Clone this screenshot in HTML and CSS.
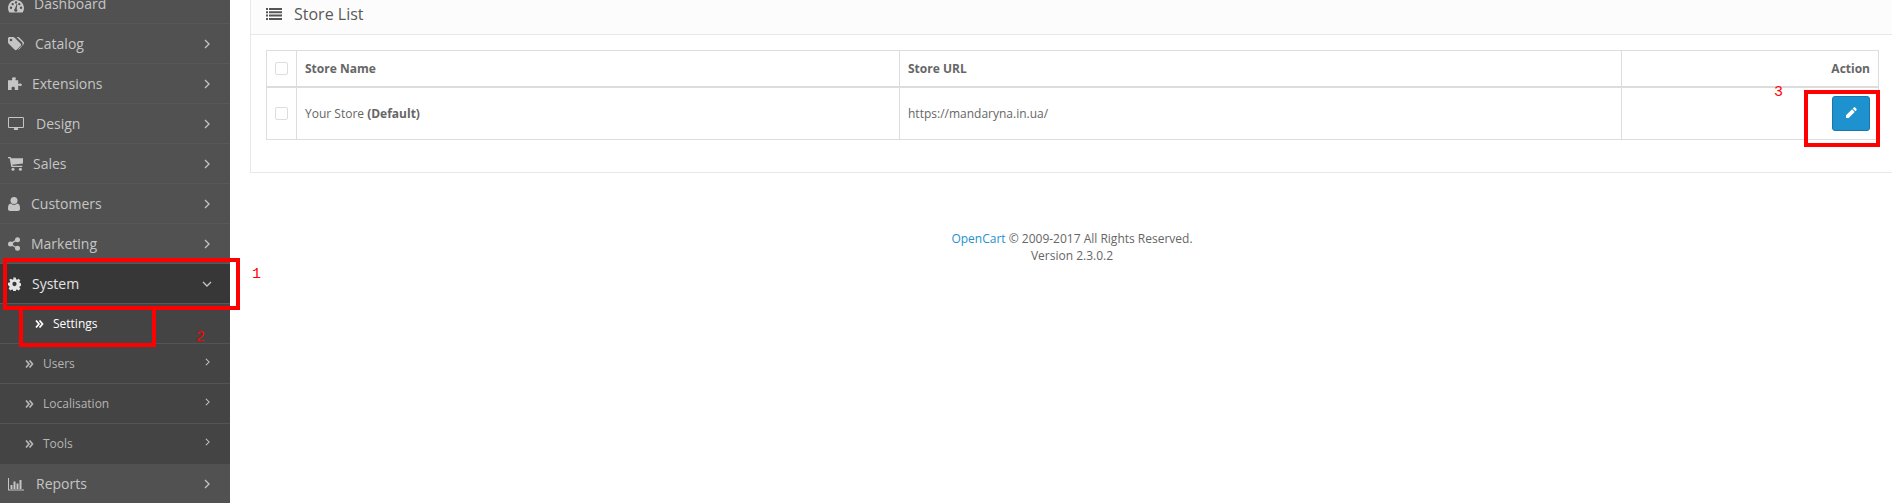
FILE: index.html
```html
<!DOCTYPE html>
<html lang="en">
<head>
  <meta charset="UTF-8" />
  <title>Store List</title>
  <link rel="stylesheet" href="styles.css">
</head>
<body>
  <svg class="defs" width="0" height="0">
    <symbol id="i-gauge" viewBox="0 0 16 14"><path fill-rule="evenodd" d="M8 1C3.600 1 0 4.600 0 9c0 1.600.4 3 1.200 4.200.2.300.4.400.7.400h12.200c.3 0 .5-.1.700-.4C15.600 12 16 10.600 16 9c0-4.400-3.600-8-8-8zM3 10a1.200 1.200 0 1 1 0-2.400A1.200 1.200 0 0 1 3 10zm1.700-3.700a1.200 1.200 0 1 1 0-2.400 1.200 1.200 0 0 1 0 2.400zM8 4.600a1.200 1.200 0 1 1 0-2.400 1.200 1.200 0 0 1 0 2.400zm1.500 6.600a1.700 1.700 0 1 1-2.600-1.500L8.600 5l.7.200-.6 5c.4.200.7.500.8 1zM13 10a1.200 1.200 0 1 1 0-2.400 1.200 1.200 0 0 1 0 2.400zm-1.700-3.700a1.200 1.200 0 1 1 0-2.400 1.200 1.200 0 0 1 0 2.400z"/></symbol>
    <symbol id="i-tags" viewBox="0 0 16 14"><path fill-rule="evenodd" d="M0 1.500C0 .700.700 0 1.500 0H5c.6 0 1.300.3 1.700.7l6 6c.6.600.6 1.500 0 2.100l-3.900 3.900c-.6.600-1.500.6-2.100 0l-6-6C.300 6.300 0 5.600 0 5zM3 4.300a1.300 1.300 0 1 0 0-2.600 1.300 1.300 0 0 0 0 2.600z"/><path d="M8.500 0h1.400c.6 0 1.300.3 1.700.7l4 4.400c.6.600.6 1.500 0 2.100L11.500 12c-.4.400-1 .6-1.500.5l4-4c.9-.9.900-2.300 0-3.200z"/></symbol>
    <symbol id="i-puzzle" viewBox="0 0 14 14"><path d="M5.700.300c1.300-.5 2.500.3 2.100 1.400-.2.500-.4.800-.3 1.200.1.300.4.400 1 .4h1.700v3c0 .5.200.8.500.8.400 0 .6-.5 1.200-.6 1-.2 1.900.4 1.900 1.300s-.9 1.500-1.900 1.300c-.6-.1-.8-.6-1.200-.6-.3 0-.5.300-.5.800V13H7.300c-.5 0-.8-.2-.8-.5 0-.4.500-.7.500-1.300 0-.9-.8-1.500-1.800-1.500s-1.800.6-1.800 1.500c0 .6.500.9.500 1.300 0 .3-.3.500-.8.500H0V3.300h3.200c.6 0 .9-.1 1-.4.100-.4-.1-.7-.3-1.200C3.700 1.100 4.700.600 5.700.300z"/></symbol>
    <symbol id="i-desktop" viewBox="0 0 16 14"><path fill-rule="evenodd" d="M1.300 0h13.400C15.400 0 16 .6 16 1.300v8.400c0 .7-.6 1.300-1.300 1.300H9.800c0 .9.400 1.400.4 1.700 0 .2-.1.300-.3.300H6.100c-.2 0-.3-.1-.3-.3 0-.3.400-.8.400-1.700H1.300C.6 11 0 10.400 0 9.700V1.300C0 .6.600 0 1.300 0zM1 1v9h14V1z"/></symbol>
    <symbol id="i-cart" viewBox="0 0 15 14"><path fill-rule="evenodd" d="M0 0h2.700l.4 1.300H15v5.200l-10.700 1.300.2.900h9.800v1.300H3.300L1.700 1.300H0z"/><circle cx="5" cy="12.300" r="1.500"/><circle cx="12.400" cy="12.300" r="1.500"/></symbol>
    <symbol id="i-user" viewBox="0 0 12 14"><circle cx="6" cy="3.600" r="3.500"/><path d="M2.700 6.500C3.600 7.300 4.700 7.800 6 7.800s2.400-.5 3.300-1.300C11 6.800 12 8.300 12 11v1c0 1.100-.9 2-2 2H2c-1.100 0-2-.9-2-2v-1c0-2.700 1-4.200 2.700-4.500z"/></symbol>
    <symbol id="i-share" viewBox="0 0 12 14"><circle cx="2.500" cy="7" r="2.500"/><circle cx="9.500" cy="2.700" r="2.500"/><circle cx="9.500" cy="11.300" r="2.500"/><path d="M2 6.300l7-4.200.6 1.100-7 4.200zM2.600 6.500l7 4.200-.6 1.100-7-4.200z"/></symbol>
    <symbol id="i-cog" viewBox="0 0 14 14"><path fill-rule="evenodd" d="M5.700 0h2.600l.4 1.900 1.100.5L11.500 1.300l1.800 1.800-1.100 1.700.5 1.100 1.900.4v2.600l-1.900.4-.5 1.100 1.100 1.700-1.800 1.800-1.700-1.100-1.100.5-.4 1.900H5.700l-.4-1.900-1.100-.5-1.700 1.100L.7 11.900l1.100-1.700-.5-1.100L0 8.300V5.700l1.900-.4.500-1.100-1.100-1.700L3.100 1.300l1.700 1.100 1.100-.5zM7 9.300a2.300 2.300 0 1 0 0-4.600 2.300 2.300 0 0 0 0 4.600z"/></symbol>
    <symbol id="i-chart" viewBox="0 0 16 14"><path d="M0 1h1v11.500h15v1H0z"/><path d="M2.500 8h2v4h-2zM5.500 4.500h2V12h-2zM8.500 6.500h2V12h-2zM11.500 3h2v9h-2z"/></symbol>
    <symbol id="i-list" viewBox="0 0 16 14"><path d="M0 1h2v2H0zM3 1h13v2H3zM0 4.300h2v2H0zM3 4.300h13v2H3zM0 7.600h2v2H0zM3 7.600h13v2H3zM0 10.900h2v2H0zM3 10.900h13v2H3z"/></symbol>
    <symbol id="i-pencil" viewBox="0 0 12 12"><path d="M8.800.6c.4-.4 1-.4 1.400 0l1.200 1.200c.4.400.4 1 0 1.400l-1 1-2.600-2.600zM7.100 2.300l2.600 2.600-6 6H1V8.300z"/></symbol>
    <symbol id="i-right" viewBox="0 0 6 10"><path d="M1 1l4 4-4 4" fill="none" stroke="currentColor" stroke-width="1.300"/></symbol>
    <symbol id="i-down" viewBox="0 0 10 6"><path d="M1 1l4 4 4-4" fill="none" stroke="currentColor" stroke-width="1.300"/></symbol>
    <symbol id="i-double" viewBox="0 0 9 8"><path d="M1 .5L4 4 1 7.500M4.500 .5L7.500 4l-3 3.500" fill="none" stroke="currentColor" stroke-width="1.700"/></symbol>
  </svg>

  <div class="page">
    <nav class="sidebar">
      <ul class="menu">
        <li class="menu-item first"><svg class="ico ico-w"><use href="#i-gauge"/></svg><span class="label gap-34">Dashboard</span></li>
        <li class="menu-item"><svg class="ico ico-w"><use href="#i-tags"/></svg><span class="label gap-35">Catalog</span><svg class="arrow"><use href="#i-right"/></svg></li>
        <li class="menu-item"><svg class="ico ico-p"><use href="#i-puzzle"/></svg><span class="label gap-33">Extensions</span><svg class="arrow"><use href="#i-right"/></svg></li>
        <li class="menu-item"><svg class="ico ico-w"><use href="#i-desktop"/></svg><span class="label gap-36">Design</span><svg class="arrow"><use href="#i-right"/></svg></li>
        <li class="menu-item"><svg class="ico ico-c"><use href="#i-cart"/></svg><span class="label gap-33">Sales</span><svg class="arrow"><use href="#i-right"/></svg></li>
        <li class="menu-item"><svg class="ico ico-u"><use href="#i-user"/></svg><span class="label gap-31">Customers</span><svg class="arrow"><use href="#i-right"/></svg></li>
        <li class="menu-item"><svg class="ico ico-s"><use href="#i-share"/></svg><span class="label gap-32">Marketing</span><svg class="arrow"><use href="#i-right"/></svg></li>
        <li class="menu-item open"><svg class="ico ico-g"><use href="#i-cog"/></svg><span class="label gap-32">System</span><svg class="arrow-down"><use href="#i-down"/></svg></li>
        <li class="sub-item current"><svg class="dbl"><use href="#i-double"/></svg><span>Settings</span></li>
        <li class="sub-item"><svg class="dbl"><use href="#i-double"/></svg><span>Users</span><svg class="arrow small"><use href="#i-right"/></svg></li>
        <li class="sub-item"><svg class="dbl"><use href="#i-double"/></svg><span>Localisation</span><svg class="arrow small"><use href="#i-right"/></svg></li>
        <li class="sub-item"><svg class="dbl"><use href="#i-double"/></svg><span>Tools</span><svg class="arrow small"><use href="#i-right"/></svg></li>
        <li class="menu-item last"><svg class="ico ico-w"><use href="#i-chart"/></svg><span class="label gap-36">Reports</span><svg class="arrow"><use href="#i-right"/></svg></li>
      </ul>
    </nav>

    <main class="content">
      <section class="panel">
        <div class="panel-heading">
          <svg class="list-ico"><use href="#i-list"/></svg>
          <h3>Store List</h3>
        </div>
        <div class="panel-body">
          <table class="stores">
            <thead>
              <tr>
                <th class="col-check"><span class="check"></span></th>
                <th class="col-name">Store Name</th>
                <th class="col-url">Store URL</th>
                <th class="col-action">Action</th>
              </tr>
            </thead>
            <tbody>
              <tr>
                <td class="col-check"><span class="check"></span></td>
                <td>Your Store <b>(Default)</b></td>
                <td>https://mandaryna.in.ua/</td>
                <td class="col-action"><a class="btn-edit"><svg class="pencil"><use href="#i-pencil"/></svg></a></td>
              </tr>
            </tbody>
          </table>
        </div>
      </section>
      <footer class="footer">
        <a class="footer-link">OpenCart</a> © 2009-2017 All Rights Reserved.<br>Version 2.3.0.2
      </footer>
    </main>
  </div>

  <!-- red annotations drawn over the screenshot -->
  <div class="mark mark-1"></div>
  <div class="mark mark-2"></div>
  <div class="mark mark-3"></div>
  <span class="num num-1">1</span>
  <span class="num num-2">2</span>
  <span class="num num-3">3</span>
</body>
</html>
```

FILE: styles.css
```css
* {
  box-sizing: border-box;
}

html, body {
  margin: 0;
  padding: 0;
  height: 503px;
  overflow: hidden;
}

body {
  font-family: 'Open Sans', sans-serif;
  font-size: 12px;
  color: #666;
  background-color: #fff;
  position: relative;
}

.defs {
  position: absolute;
}

.page {
  display: flex;
  height: 503px;
}

/* Sidebar */
.sidebar {
  width: 230px;
  flex: none;
  background-color: #515151;
  overflow: hidden;
}

.menu {
  list-style: none;
  margin: 0;
  padding: 0;
}

.menu-item {
  display: flex;
  align-items: center;
  height: 40px;
  padding-left: 8px;
  font-size: 14px;
  color: #c5c5c5;
  border-bottom: 1px solid #585858;
}

.menu-item.first {
  height: 24px;
  align-items: flex-end;
  padding-bottom: 10px;
}

.menu-item.open {
  background-color: #373737;
  color: #e4e4e4;
  border-top: 1px solid #585858;
  border-bottom-color: #585858;
  height: 41px;
  margin-top: -1px;
}

.menu-item.last {
  border-bottom: 0;
  padding-bottom: 1px;
}

.ico {
  flex: none;
  height: 14px;
  fill: currentColor;
}

.ico-w { width: 16px; }
.ico-p { width: 14px; }
.ico-c { width: 15px; }
.ico-u { width: 12px; }
.ico-s { width: 12px; }
.ico-g { width: 13px; }

.label { flex: none; }

.gap-31 { margin-left: 11px; }
.gap-32 { margin-left: 11px; }
.gap-33 { margin-left: 10px; }
.gap-34 { margin-left: 10px; }
.gap-35 { margin-left: 11px; }
.gap-36 { margin-left: 12px; }

.arrow {
  width: 6px;
  height: 10px;
  margin-left: auto;
  margin-right: 20px;
  color: #c5c5c5;
}

.arrow.small {
  width: 5px;
  height: 8px;
  margin-top: -3px;
}

.arrow-down {
  width: 10px;
  height: 6px;
  margin-left: auto;
  margin-right: 18px;
  color: #c5c5c5;
}

.sub-item {
  display: flex;
  align-items: center;
  height: 40px;
  padding-left: 25px;
  font-size: 12px;
  color: #b5b5b5;
  background-color: #444;
  border-bottom: 1px solid #545454;
}

.sub-item.current {
  color: #fff;
}

.sub-item:nth-last-child(2) {
  border-bottom: 0;
  padding-bottom: 1px;
}

.dbl {
  width: 9px;
  height: 8px;
  margin-right: 9px;
  flex: none;
}

.current .dbl {
  margin-left: 10px;
  margin-right: 9px;
}

/* Content */
.content {
  flex: 1;
  padding: 0 0 0 20px;
  min-width: 0;
}

.panel {
  margin-top: -1px;
  border: 1px solid #e8e8e8;
  border-right: 0;
  height: 174px;
}

.panel-heading {
  display: flex;
  align-items: center;
  height: 35px;
  padding: 0 0 7px 15px;
  background-color: #fcfcfc;
  border-bottom: 1px solid #e8e8e8;
}

.list-ico {
  width: 16px;
  height: 14px;
  fill: #555;
  margin-right: 12px;
}

.panel-heading h3 {
  margin: 0;
  font-size: 16px;
  font-weight: 400;
  color: #595959;
}

.panel-body {
  padding: 15px 13px 0 15px;
}

.stores {
  width: 100%;
  border-collapse: collapse;
  table-layout: fixed;
}

.stores th, .stores td {
  border: 1px solid #ddd;
  padding: 0 8px;
  text-align: left;
  font-size: 12px;
}

.stores th {
  height: 36px;
  border-bottom-width: 2px;
  font-weight: 700;
  color: #666;
}

.stores td {
  height: 53px;
}

.stores th.col-check, .stores td.col-check {
  width: 30px;
  padding: 0 0 0 8px;
}

.stores .col-name {
  width: 603px;
}

.stores .col-url {
  width: 722px;
}

.stores .col-action {
  text-align: right;
}

.check {
  display: block;
  width: 13px;
  height: 13px;
  background-color: #fff;
  border: 1px solid #ddd;
  border-radius: 2px;
}

.btn-edit {
  display: inline-flex;
  align-items: center;
  justify-content: center;
  width: 38px;
  height: 35px;
  background-color: #1e91cf;
  border: 1px solid #1978ab;
  border-radius: 3px;
  vertical-align: middle;
}

.pencil {
  width: 12px;
  height: 12px;
  fill: #fff;
}

.footer {
  margin-top: 57px;
  padding-left: 2px;
  text-align: center;
  font-size: 12px;
  line-height: 17px;
  color: #666;
}

.footer-link {
  color: #1e91cf;
}

/* Annotations */
.mark {
  position: absolute;
  border: 4px solid #f00;
}

.mark-1 { left: 3px; top: 258px; width: 237px; height: 52px; }
.mark-2 { left: 19px; top: 306px; width: 137px; height: 41px; }
.mark-3 { left: 1804px; top: 90px; width: 76px; height: 57px; }

.num {
  position: absolute;
  font-family: 'Liberation Mono', monospace;
  font-size: 15px;
  line-height: 15px;
  color: #f00;
}

.num-1 { left: 252px; top: 267px; }
.num-2 { left: 196px; top: 330px; }
.num-3 { left: 1774px; top: 85px; }
```
